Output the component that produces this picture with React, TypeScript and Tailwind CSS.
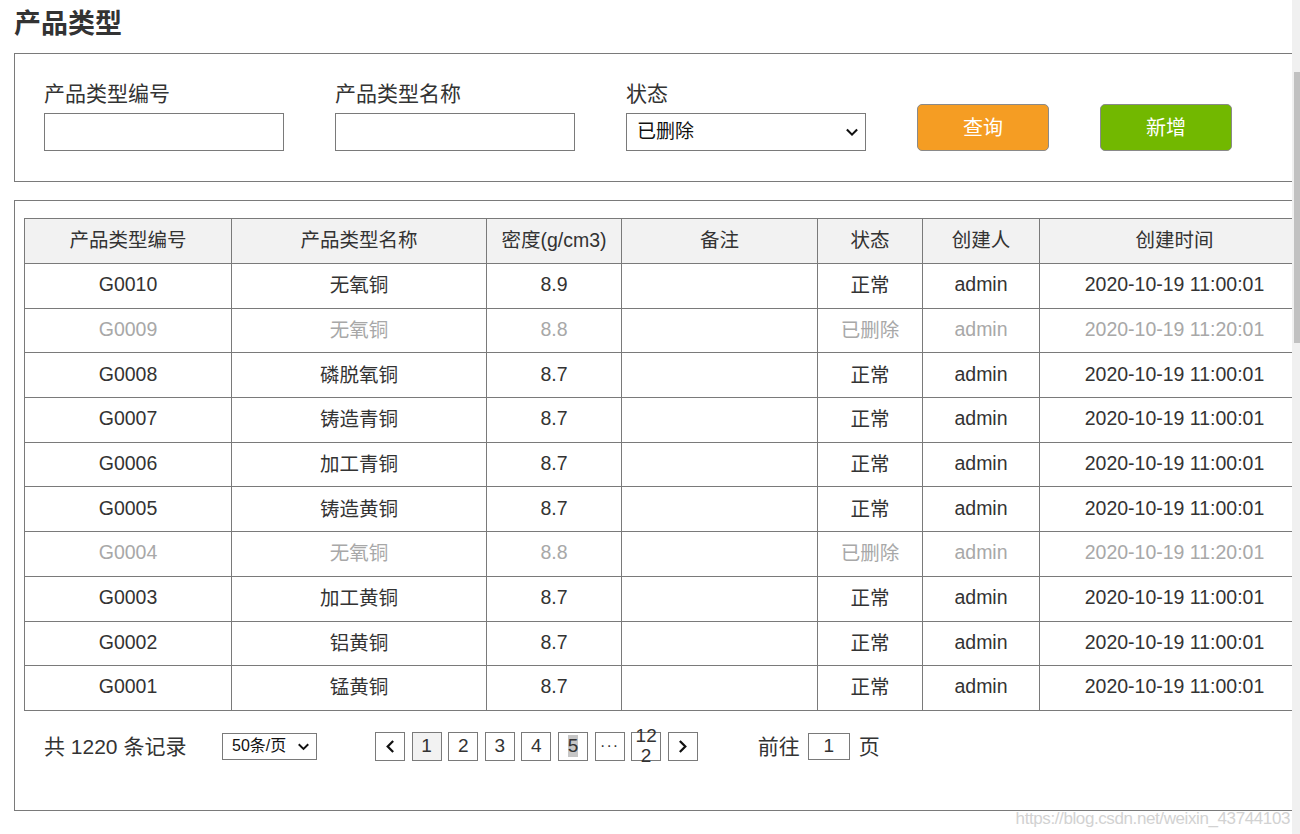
const rows = [
  { code: "G0010", name: "无氧铜", density: "8.9", status: "正常", user: "admin", time: "2020-10-19 11:00:01", deleted: false },
  { code: "G0009", name: "无氧铜", density: "8.8", status: "已删除", user: "admin", time: "2020-10-19 11:20:01", deleted: true },
  { code: "G0008", name: "磷脱氧铜", density: "8.7", status: "正常", user: "admin", time: "2020-10-19 11:00:01", deleted: false },
  { code: "G0007", name: "铸造青铜", density: "8.7", status: "正常", user: "admin", time: "2020-10-19 11:00:01", deleted: false },
  { code: "G0006", name: "加工青铜", density: "8.7", status: "正常", user: "admin", time: "2020-10-19 11:00:01", deleted: false },
  { code: "G0005", name: "铸造黄铜", density: "8.7", status: "正常", user: "admin", time: "2020-10-19 11:00:01", deleted: false },
  { code: "G0004", name: "无氧铜", density: "8.8", status: "已删除", user: "admin", time: "2020-10-19 11:20:01", deleted: true },
  { code: "G0003", name: "加工黄铜", density: "8.7", status: "正常", user: "admin", time: "2020-10-19 11:00:01", deleted: false },
  { code: "G0002", name: "铝黄铜", density: "8.7", status: "正常", user: "admin", time: "2020-10-19 11:00:01", deleted: false },
  { code: "G0001", name: "锰黄铜", density: "8.7", status: "正常", user: "admin", time: "2020-10-19 11:00:01", deleted: false },
];

const headers = ["产品类型编号", "产品类型名称", "密度(g/cm3)", "备注", "状态", "创建人", "创建时间"];
const colWidths = ["w-[207px]", "w-[255px]", "w-[135px]", "w-[196px]", "w-[105px]", "w-[117px]", "w-[270px]"];

function Chevron({ dir, className }: { dir: "left" | "right" | "down"; className?: string }) {
  const d =
    dir === "left" ? "M10 3 L5 8 L10 13" : dir === "right" ? "M6 3 L11 8 L6 13" : "M3 6 L8 11 L13 6";
  return (
    <svg viewBox="0 0 16 16" className={className} fill="none" stroke="#111" strokeWidth="2.4" strokeLinecap="square">
      <path d={d} />
    </svg>
  );
}

function PageBox({ children, className = "" }: { children: React.ReactNode; className?: string }) {
  return (
    <div className={`w-[30px] h-[29px] border border-[#7a7a7a] flex items-center justify-center text-[19px] text-[#333] ${className}`}>
      {children}
    </div>
  );
}

export default function App() {
  return (
    <div className="flex w-[1300px] h-[834px] overflow-hidden bg-white font-['Liberation_Sans','Noto_Sans_CJK_SC',sans-serif]">
      <div className="relative w-[1292px] h-full overflow-hidden">
        <div className="w-[1330px] pl-[14px]">
          <h1 className="pt-[6px] leading-[36px] text-[27px] font-bold text-[#333]">产品类型</h1>

          {/* filter */}
          <div className="mt-[11px] w-[1306px] border border-[#7a7a7a] pl-[29px] pt-[26px] pb-[30px] flex items-end gap-[51px]">
            {["产品类型编号", "产品类型名称"].map((label) => (
              <div key={label} className="flex flex-col gap-[5px]">
                <span className="text-[21px] leading-[28px] text-[#333]">{label}</span>
                <div className="w-[240px] h-[38px] border border-[#7a7a7a]" />
              </div>
            ))}
            <div className="flex flex-col gap-[5px]">
              <span className="text-[21px] leading-[28px] text-[#333]">状态</span>
              <div className="w-[240px] h-[38px] border border-[#7a7a7a] flex items-center justify-between pl-[10px] pr-[6px]">
                <span className="text-[19px] text-[#111]">已删除</span>
                <Chevron dir="down" className="w-[14px] h-[14px]" />
              </div>
            </div>
            <button className="w-[132px] h-[47px] rounded-[5px] border border-[#8a8a8a] bg-[#f59d23] text-white text-[20px]">查询</button>
            <button className="w-[132px] h-[47px] rounded-[5px] border border-[#8a8a8a] bg-[#72b800] text-white text-[20px]">新增</button>
          </div>

          {/* table */}
          <div className="mt-[18px] w-[1306px] border border-[#7a7a7a] px-[9px] pt-[17px] pb-[49px]">
            <table className="table-fixed border-collapse w-[1285px] text-[19.5px]">
              <colgroup>
                {colWidths.map((w, i) => (
                  <col key={i} className={w} />
                ))}
              </colgroup>
              <thead>
                <tr className="h-[45px] bg-[#f2f2f2]">
                  {headers.map((h) => (
                    <th key={h} className="border border-[#7a7a7a] font-normal text-[#333] text-center">{h}</th>
                  ))}
                </tr>
              </thead>
              <tbody>
                {rows.map((r) => (
                  <tr key={r.code} className={`h-[44.7px] ${r.deleted ? "text-[#a8a8a8]" : "text-[#333]"}`}>
                    <td className="border border-[#7a7a7a] text-center pb-[2px]">{r.code}</td>
                    <td className="border border-[#7a7a7a] text-center">{r.name}</td>
                    <td className="border border-[#7a7a7a] text-center pb-[2px]">{r.density}</td>
                    <td className="border border-[#7a7a7a]"></td>
                    <td className="border border-[#7a7a7a] text-center">{r.status}</td>
                    <td className="border border-[#7a7a7a] text-center pb-[2px]">{r.user}</td>
                    <td className="border border-[#7a7a7a] text-center pb-[2px]">{r.time}</td>
                  </tr>
                ))}
              </tbody>
            </table>

            {/* pagination */}
            <div className="mt-[21px] pl-[20px] flex items-center h-[29px] text-[21px] text-[#333]">
              <span className="w-[178px]">共 1220 条记录</span>
              <div className="w-[95px] h-[27px] border border-[#7a7a7a] flex items-center pl-[9px] pr-[6px] justify-between">
                <span className="text-[16px] leading-[20px] text-[#111] whitespace-nowrap">50条/页</span>
                <Chevron dir="down" className="w-[13px] h-[13px]" />
              </div>
              <div className="ml-[58px] flex gap-[6.6px]">
                <PageBox><Chevron dir="left" className="w-[15px] h-[15px]" /></PageBox>
                <PageBox className="bg-[#f2f2f2]">1</PageBox>
                <PageBox>2</PageBox>
                <PageBox>3</PageBox>
                <PageBox>4</PageBox>
                <PageBox><span className="bg-[#c6c6c6] leading-[22px]">5</span></PageBox>
                <PageBox><span className="text-[16px] tracking-[1px]">···</span></PageBox>
                <PageBox>
                  <span className="flex flex-col items-center leading-[20px]">
                    <span>12</span>
                    <span>2</span>
                  </span>
                </PageBox>
                <PageBox><Chevron dir="right" className="w-[15px] h-[15px]" /></PageBox>
              </div>
              <span className="ml-[60px]">前往</span>
              <div className="ml-[8px] w-[42px] h-[27px] border border-[#7a7a7a] flex items-center justify-center text-[19px]">1</div>
              <span className="ml-[9px]">页</span>
            </div>
          </div>
        </div>

        <div className="absolute right-[2px] top-[806px] text-[17px] tracking-[-0.4px] text-[#d2d2d2] whitespace-nowrap">
          https://blog.csdn.net/weixin_43744103
        </div>
      </div>

      {/* scrollbar */}
      <div className="w-[8px] h-full bg-[#f0f0f0] pt-[72px] pl-[2px]">
        <div className="h-[271px] bg-[#c1c1c1]" />
      </div>
    </div>
  );
}
